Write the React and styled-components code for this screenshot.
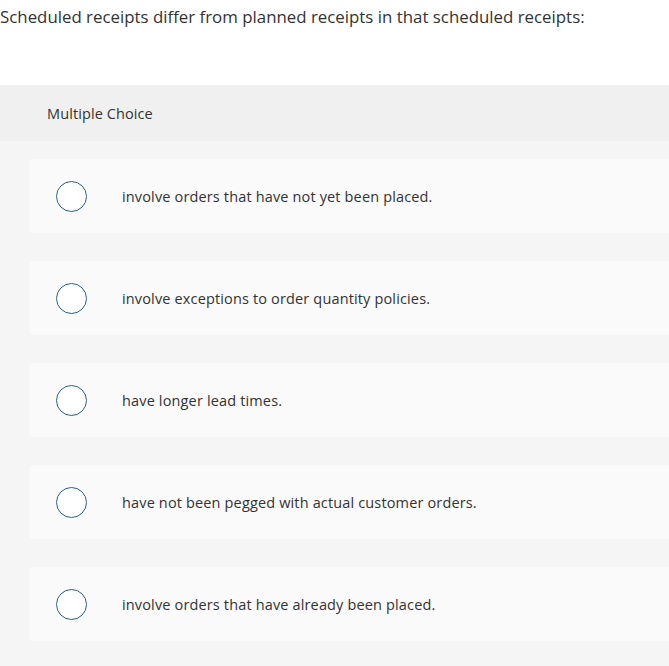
import React from "react";
import styled, { createGlobalStyle } from "styled-components";

const Global = createGlobalStyle`
  html, body { margin: 0; padding: 0; background: #fff; }
  body { font-family: "Open Sans", Lato, Arial, sans-serif; color: #333; }
`;

const Page = styled.div`
  width: 669px;
  overflow: hidden;
`;

const Question = styled.p`
  margin: 0;
  padding: 6px 0 0 0;
  height: 85px;
  font-size: 16.85px;
  line-height: 22px;
  color: #333;
  white-space: nowrap;
  box-sizing: border-box;
`;

const TypeBar = styled.div`
  height: 56px;
  background: #f0f0f0;
  display: flex;
  align-items: center;
  padding-left: 47px;
  font-size: 14.5px;
  letter-spacing: 0.1px;
  color: #333;
`;

const Choices = styled.div`
  background: #f5f5f5;
  padding: 18px 0 25px 29px;
  display: flex;
  flex-direction: column;
  gap: 28px;
`;

const Card = styled.label`
  height: 74px;
  margin-right: -10px;
  background: #fafafa;
  border-radius: 4px;
  display: flex;
  align-items: center;
  padding-left: 27px;
`;

const Radio = styled.span`
  width: 29px;
  height: 29px;
  border: 1.3px solid #2d5f92;
  border-radius: 50%;
  background: #fff;
  flex: none;
`;

const ChoiceText = styled.span`
  margin-left: 35px;
  font-size: 14.5px;
  letter-spacing: 0.15px;
  color: #333;
`;

const options = [
  "involve orders that have not yet been placed.",
  "involve exceptions to order quantity policies.",
  "have longer lead times.",
  "have not been pegged with actual customer orders.",
  "involve orders that have already been placed.",
];

export default function App() {
  return (
    <Page>
      <Global />
      <Question>Scheduled receipts differ from planned receipts in that scheduled receipts:</Question>
      <TypeBar>Multiple Choice</TypeBar>
      <Choices>
        {options.map((o) => (
          <Card key={o}>
            <Radio />
            <ChoiceText>{o}</ChoiceText>
          </Card>
        ))}
      </Choices>
    </Page>
  );
}
